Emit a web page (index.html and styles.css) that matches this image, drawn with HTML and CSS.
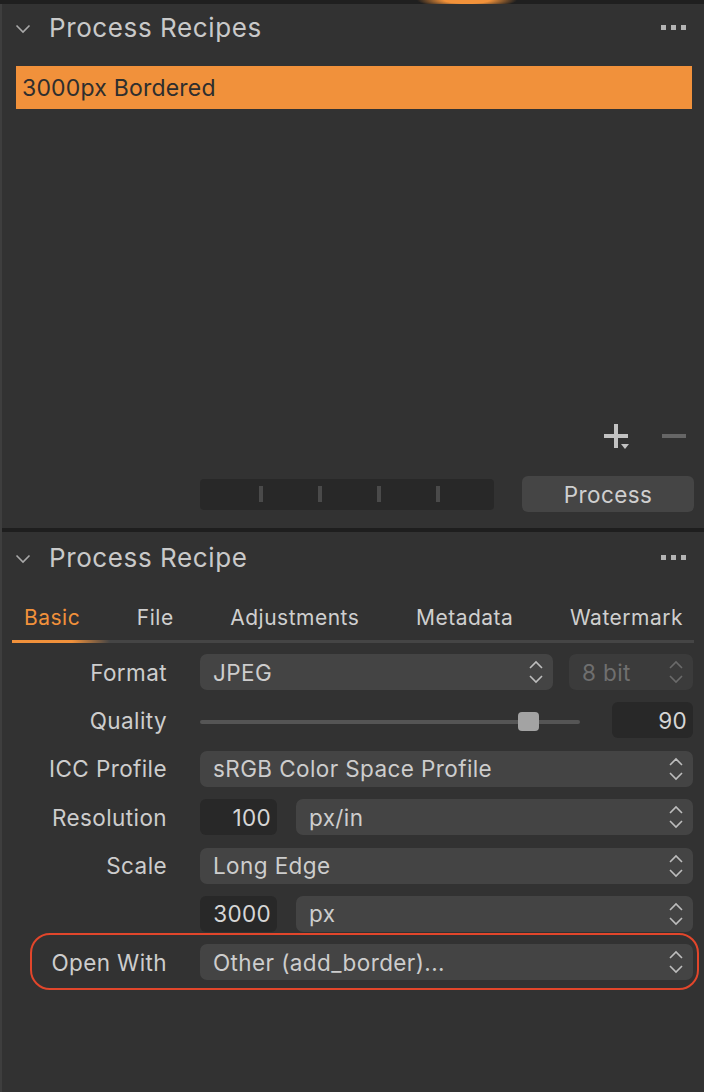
FILE: index.html
```html
<!DOCTYPE html>
<html>
<head>
<meta charset="utf-8">
<link rel="stylesheet" href="styles.css">
</head>
<body>
<div class="topbar"></div>
<div class="app">
  <section class="panel recipes">
    <div class="phead">
      <svg class="chev" width="16" height="10" viewBox="0 0 16 10"><path d="M1.5 1.5 L8 8 L14.5 1.5" fill="none" stroke="#a9a9a9" stroke-width="1.6"/></svg>
      <div class="ptitle">Process Recipes</div>
      <div class="dots"><i></i><i></i><i></i></div>
    </div>
    <div class="list">
      <div class="item sel">3000px Bordered</div>
    </div>
    <div class="addrem">
      <svg width="26" height="26" viewBox="0 0 26 26"><rect x="0" y="10" width="24" height="4" fill="#c2c2c2"/><rect x="10" y="0" width="4" height="24" fill="#c2c2c2"/><path d="M17 20 L25 20 L21 25 Z" fill="#c2c2c2"/></svg>
      <svg width="24" height="26" viewBox="0 0 24 26"><rect x="0" y="10" width="24" height="4" fill="#666"/></svg>
    </div>
    <div class="pfoot">
      <div class="progress"><i></i><i></i><i></i><i></i></div>
      <div class="pbtn">Process</div>
    </div>
  </section>
  <div class="divider"></div>
  <section class="panel recipe">
    <div class="phead">
      <svg class="chev" width="16" height="10" viewBox="0 0 16 10"><path d="M1.5 1.5 L8 8 L14.5 1.5" fill="none" stroke="#a9a9a9" stroke-width="1.6"/></svg>
      <div class="ptitle">Process Recipe</div>
      <div class="dots"><i></i><i></i><i></i></div>
    </div>
    <div class="tabs">
      <span class="tab active">Basic</span>
      <span class="tab">File</span>
      <span class="tab">Adjustments</span>
      <span class="tab">Metadata</span>
      <span class="tab">Watermark</span>
    </div>
    <div class="tabline"></div>
    <div class="form">
      <div class="row">
        <div class="lbl">Format</div>
        <div class="ctl split-fmt">
          <div class="dd">JPEG<svg class="step" width="16" height="28" viewBox="0 0 16 28"><path d="M2 10 L8 4 L14 10 M2 18 L8 24 L14 18" fill="none" stroke="#bdbdbd" stroke-width="1.6"/></svg></div>
          <div class="dd dis">8 bit<svg class="step" width="16" height="28" viewBox="0 0 16 28"><path d="M2 10 L8 4 L14 10 M2 18 L8 24 L14 18" fill="none" stroke="#6a6a6a" stroke-width="1.6"/></svg></div>
        </div>
      </div>
      <div class="row">
        <div class="lbl">Quality</div>
        <div class="ctl split-q">
          <div class="slider"><div class="track"></div><div class="thumb" style="left: 83.6%"></div></div>
          <div class="num">90</div>
        </div>
      </div>
      <div class="row">
        <div class="lbl">ICC Profile</div>
        <div class="ctl">
          <div class="dd">sRGB Color Space Profile<svg class="step" width="16" height="28" viewBox="0 0 16 28"><path d="M2 10 L8 4 L14 10 M2 18 L8 24 L14 18" fill="none" stroke="#bdbdbd" stroke-width="1.6"/></svg></div>
        </div>
      </div>
      <div class="row">
        <div class="lbl">Resolution</div>
        <div class="ctl split-n">
          <div class="num">100</div>
          <div class="dd">px/in<svg class="step" width="16" height="28" viewBox="0 0 16 28"><path d="M2 10 L8 4 L14 10 M2 18 L8 24 L14 18" fill="none" stroke="#bdbdbd" stroke-width="1.6"/></svg></div>
        </div>
      </div>
      <div class="row">
        <div class="lbl">Scale</div>
        <div class="ctl">
          <div class="dd">Long Edge<svg class="step" width="16" height="28" viewBox="0 0 16 28"><path d="M2 10 L8 4 L14 10 M2 18 L8 24 L14 18" fill="none" stroke="#bdbdbd" stroke-width="1.6"/></svg></div>
        </div>
      </div>
      <div class="row">
        <div class="lbl"></div>
        <div class="ctl split-n">
          <div class="num">3000</div>
          <div class="dd">px<svg class="step" width="16" height="28" viewBox="0 0 16 28"><path d="M2 10 L8 4 L14 10 M2 18 L8 24 L14 18" fill="none" stroke="#bdbdbd" stroke-width="1.6"/></svg></div>
        </div>
      </div>
      <div class="row hl">
        <div class="lbl">Open With</div>
        <div class="ctl">
          <div class="dd">Other (add_border)...<svg class="step" width="16" height="28" viewBox="0 0 16 28"><path d="M2 10 L8 4 L14 10 M2 18 L8 24 L14 18" fill="none" stroke="#bdbdbd" stroke-width="1.6"/></svg></div>
        </div>
      </div>
    </div>
  </section>
</div>
</body>
</html>
```

FILE: styles.css
```css
* { box-sizing: border-box; }
html, body { margin: 0; padding: 0; }
body {
  width: 704px;
  height: 1092px;
  overflow: hidden;
  background: #323232;
  font-family: Inter, "Liberation Sans", sans-serif;
  color: #c8c8c8;
}
.topbar {
  height: 4px;
  background:
    radial-gradient(ellipse 50px 8px at 467px 0px, #f2923a 0%, #f2923a 45%, rgba(242,146,58,0) 100%),
    #1f1f1f;
}
.app {
  height: 1088px;
  border-left: 2px solid #3e3e3e;
  display: flex;
  flex-direction: column;
}
.panel { display: flex; flex-direction: column; }
.recipes { height: 524px; }
.phead {
  display: flex;
  align-items: center;
  height: 47px;
  padding: 0 18px 0 13px;
}
.recipe .phead { height: 51px; }
.chev { flex: none; margin-top: 2px; }
.ptitle {
  flex: 1;
  margin-left: 18px;
  font-size: 26px;
  color: #c9c9c9;
  letter-spacing: 0.6px;
}
.dots { display: flex; gap: 5px; }
.dots i { width: 5px; height: 5px; background: #b4b4b4; display: block; }
.list { flex: 1; padding: 15px 12px 0 14px; }
.item {
  height: 43px;
  display: flex;
  align-items: center;
  padding-left: 6px;
  font-size: 23px;
  letter-spacing: 0.2px;
}
.item.sel { background: #f1913b; color: #2e2e2e; }
.addrem {
  display: flex;
  justify-content: flex-end;
  align-items: center;
  gap: 32px;
  padding-right: 18px;
  height: 26px;
  margin-bottom: 26px;
}
.addrem svg { display: block; }
.pfoot {
  display: flex;
  align-items: center;
  padding: 0 10px 0 198px;
  height: 36px;
  margin-bottom: 16px;
}
.progress {
  width: 294px;
  height: 31px;
  background: #282828;
  border-radius: 4px;
  display: flex;
  justify-content: center;
  gap: 55px;
  align-items: center;
  padding-left: 4px;
}
.progress i { width: 4px; height: 16px; background: #4a4a4a; display: block; }
.pbtn {
  margin-left: 28px;
  flex: 1;
  height: 36px;
  background: #454545;
  border-radius: 6px;
  display: flex;
  align-items: center;
  justify-content: center;
  font-size: 22.5px;
  letter-spacing: 0.4px;
  color: #cfcfcf;
}
.divider { height: 4px; background: #1e1e1e; }
.tabs {
  display: flex;
  justify-content: space-between;
  padding: 21px 21px 8px 22px;
  line-height: 28px;
  font-size: 21px;
  letter-spacing: 0.5px;
  color: #cfcfcf;
}
.tab.active { color: #f1913b; }
.tabline {
  margin: 0 10px;
  height: 3px;
  background: linear-gradient(to right, #f1913b 0px, #f1913b 60px, #454545 98px, #454545 100%);
}
.form {
  display: flex;
  flex-direction: column;
  gap: 12.4px;
  padding: 11px 11px 0 10px;
}
.row {
  display: grid;
  grid-template-columns: 155px 1fr;
  column-gap: 33px;
  height: 36px;
  align-items: center;
  position: relative;
}
.lbl {
  text-align: right;
  font-size: 22.5px;
  letter-spacing: 0.4px;
  color: #cdcdcd;
}
.ctl { display: flex; height: 36px; }
.dd {
  flex: 1;
  height: 36px;
  background: #444;
  border-radius: 7px;
  display: flex;
  align-items: center;
  padding: 0 9px 0 13px;
  font-size: 22.5px;
  letter-spacing: 0.4px;
  color: #cdcdcd;
  position: relative;
}
.dd .step { margin-left: auto; flex: none; }
.dd.dis { background: #3b3b3b; color: #6f6f6f; }
.split-fmt { gap: 16px; }
.split-fmt .dd:last-child { flex: 0 0 124px; }
.split-q { gap: 32px; align-items: center; }
.slider { flex: 1; position: relative; height: 36px; }
.track {
  position: absolute;
  left: 0; right: 0; top: 18px;
  height: 4px;
  background: #555;
  border-radius: 2px;
}
.thumb {
  position: absolute;
  top: 10px;
  width: 21px;
  height: 19px;
  background: #a3a3a3;
  border-radius: 4px;
}
.num {
  height: 36px;
  background: #282828;
  border-radius: 6px;
  display: flex;
  align-items: center;
  justify-content: flex-end;
  padding-right: 6px;
  font-size: 22.5px;
  letter-spacing: 0.3px;
  color: #d6d6d6;
}
.split-q .num { width: 81px; }
.split-n { gap: 19px; }
.split-n .num { width: 77px; flex: none; }
.row.hl::after {
  content: "";
  position: absolute;
  left: 18px;
  right: -6px;
  top: -11px;
  bottom: -10px;
  border: 2.5px solid #e2462b;
  border-radius: 20px;
  pointer-events: none;
}
```
